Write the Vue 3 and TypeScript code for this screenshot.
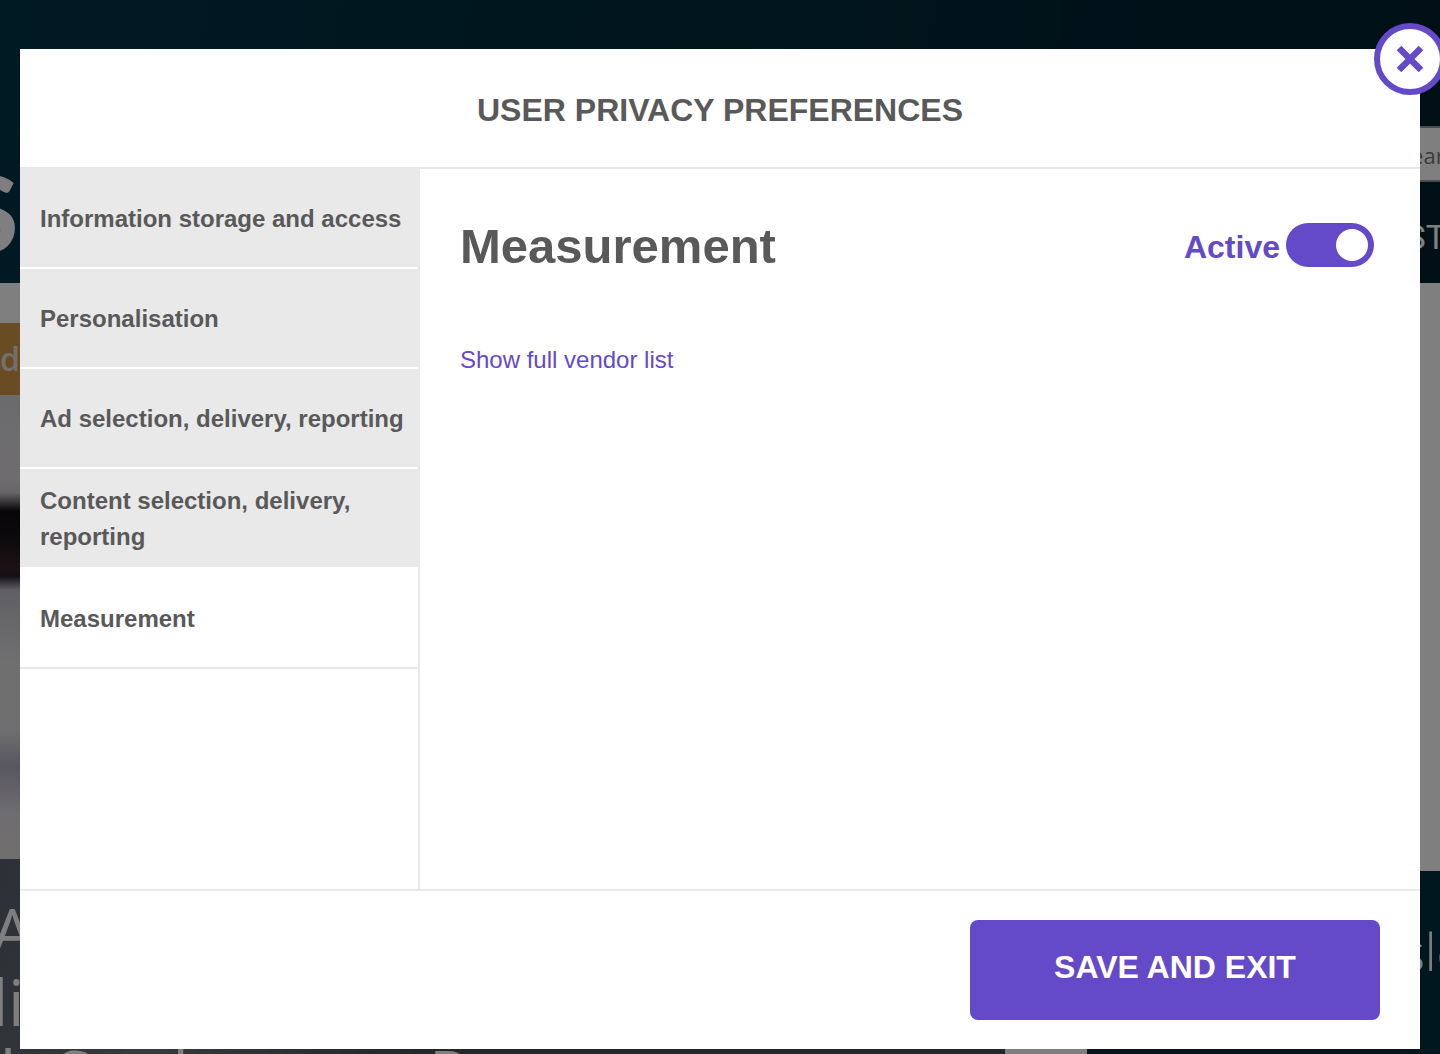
<script setup lang="ts">
import { ref } from 'vue'

interface Purpose {
  id: string
  label: string
}

const purposes: Purpose[] = [
  { id: 'storage', label: 'Information storage and access' },
  { id: 'personalisation', label: 'Personalisation' },
  { id: 'ads', label: 'Ad selection, delivery, reporting' },
  { id: 'content', label: 'Content selection, delivery, reporting' },
  { id: 'measurement', label: 'Measurement' },
]

const selected = ref<Purpose>(purposes[4])
const consent = ref<Record<string, boolean>>(
  Object.fromEntries(purposes.map((p) => [p.id, true])),
)
</script>

<template>
  <div class="shell">
    <div class="page" aria-hidden="true">
      <div class="masthead">
        <span class="brand">S</span>
        <div class="tools">
          <span class="search">Search</span>
          <span class="menu">ST</span>
        </div>
      </div>
      <div class="columns">
        <div class="story">
          <div class="tag">d</div>
          <div class="photo"></div>
          <div class="headline">
            <span class="line">A</span>
            <span class="line">li</span>
            <span class="line last">h Settlements Report</span>
          </div>
        </div>
        <div class="aside"><span class="signup">Newsletter</span></div>
      </div>
    </div>

    <div class="overlay">
      <section class="modal" role="dialog" aria-modal="true" aria-labelledby="title">
        <button class="close" type="button" aria-label="Close">
          <svg width="28" height="28" viewBox="0 0 28 28" aria-hidden="true">
            <path d="M3 3 25 25M25 3 3 25" fill="none" stroke="currentColor" stroke-width="6.5" />
          </svg>
        </button>
        <header class="top">
          <h1 id="title">USER PRIVACY PREFERENCES</h1>
        </header>
        <div class="body">
          <nav class="purposes">
            <button
              v-for="p in purposes"
              :key="p.id"
              type="button"
              class="purpose"
              :class="{ current: p.id === selected.id }"
              @click="selected = p"
            >
              {{ p.label }}
            </button>
          </nav>
          <div class="detail">
            <div class="heading">
              <h2>{{ selected.label }}</h2>
              <label class="switch">
                <span>{{ consent[selected.id] ? 'Active' : 'Inactive' }}</span>
                <input v-model="consent[selected.id]" type="checkbox" role="switch" />
              </label>
            </div>
            <a href="#vendors">Show full vendor list</a>
          </div>
        </div>
        <footer class="bottom">
          <button class="save" type="button">SAVE AND EXIT</button>
        </footer>
      </section>
    </div>
  </div>
</template>

<style>
body {
  margin: 0;
}
</style>

<style scoped>
* {
  box-sizing: border-box;
}

.shell {
  position: relative;
  height: 100vh;
  overflow: hidden;
  font-family: 'Liberation Sans', Arial, Helvetica, sans-serif;
}

/* Site behind the dialog */
.page {
  display: flex;
  flex-direction: column;
  height: 100%;
  overflow: hidden;
  background: #fff;
  color: #fff;
}

.masthead {
  display: flex;
  flex: none;
  justify-content: space-between;
  height: 283px;
  overflow: hidden;
  background: linear-gradient(100deg, #003448, #002a38 50%, #00202c);
}

.brand {
  margin: 142px 0 0 -39px;
  font: 900 104px/140px Lato, sans-serif;
}

.tools {
  display: flex;
  flex-direction: column;
  align-items: flex-end;
  padding-top: 126px;
  white-space: nowrap;
}

.search {
  width: 300px;
  height: 56px;
  margin-right: -140px;
  padding-left: 117px;
  border: 2px solid #999;
  background: #fff;
  color: #777;
  font: 22px/54px 'Open Sans', sans-serif;
}

.menu {
  margin: 30px -6px 0 0;
  font: 34px/50px Roboto, sans-serif;
}

.columns {
  display: grid;
  flex: 1;
  grid-template-columns: 1005fr 353fr;
  gap: 82px;
  overflow: hidden;
}

.story {
  padding-top: 40px;
}

.tag {
  height: 72px;
  background: #d29847;
  color: #e6e0d8;
  font: 600 32px/72px 'Open Sans', sans-serif;
}

.photo {
  height: 464px;
  background: linear-gradient(
    #d6d6dc,
    #dedadc 18%,
    #d0ccd0 21%,
    #100c10 25%,
    #181418 31%,
    #34242a 37%,
    #28202a 39%,
    #c0c0c8 42%,
    #e0dfe1 58%,
    #dedfe0 72%,
    #b0acc0 80%,
    #dcdade 90%,
    #e4dddd
  );
}

.headline {
  height: 260px;
  padding-top: 36px;
  background: linear-gradient(110deg, #5a606c, #6c7478 20%, #484e52 45%, #484e52);
  font: 64px/71px 'Open Sans', sans-serif;
  white-space: nowrap;
}

.line {
  display: block;
  margin-left: -8px;
}

.last {
  margin-left: 0;
}

.aside {
  margin-top: 588px;
  padding: 40px 0 0 210px;
  overflow: hidden;
  background: #002e40;
}

.signup {
  font: 300 52px/80px 'Open Sans', sans-serif;
}

/* Dialog */
.overlay {
  position: absolute;
  inset: 0;
  display: flex;
  padding: 49px 20px 5px;
  background: rgba(0, 0, 0, 0.5);
}

.modal {
  position: relative;
  display: flex;
  flex: 1;
  flex-direction: column;
  background: #fff;
  color: #595959;
}

.close {
  position: absolute;
  top: -26px;
  right: -26px;
  display: grid;
  place-items: center;
  width: 72px;
  height: 72px;
  padding: 0;
  border: 6px solid #6449c8;
  border-radius: 50%;
  background: #fff;
  color: #6449c8;
  cursor: pointer;
}

.top {
  padding: 42px 40px 38px;
  border-bottom: 2px solid #e9e9e9;
  text-align: center;
}

h1 {
  margin: 0;
  font-size: 32px;
  line-height: 38px;
}

.body {
  display: flex;
  flex: 1;
}

.purposes {
  flex: none;
  width: 400px;
  border-right: 2px solid #e9e9e9;
}

.purpose {
  display: block;
  width: 100%;
  height: 100px;
  padding: 2px 10px 0 20px;
  border: 0;
  border-bottom: 2px solid #fff;
  background: #e9e9e9;
  color: inherit;
  font: 700 24px/36px 'Liberation Sans', Arial, sans-serif;
  text-align: left;
  cursor: pointer;
}

.purpose.current {
  border-bottom-color: #e9e9e9;
  background: #fff;
}

.detail {
  flex: 1;
  padding: 40px;
}

.heading {
  display: flex;
  align-items: center;
  justify-content: space-between;
  height: 72px;
  margin-bottom: 61px;
}

h2 {
  margin: 0;
  padding-top: 2px;
  font-size: 49px;
  line-height: 72px;
}

.switch {
  display: flex;
  align-items: center;
  gap: 6px;
  padding-right: 6px;
  color: #6449c8;
  font-size: 32px;
  font-weight: 700;
}

.switch span {
  padding-top: 4px;
}

.switch input {
  display: flex;
  align-items: center;
  width: 88px;
  height: 44px;
  margin: 0;
  padding: 6px;
  border-radius: 22px;
  background: #999;
  appearance: none;
  cursor: pointer;
}

.switch input::before {
  width: 32px;
  height: 32px;
  border-radius: 50%;
  background: #fff;
  content: '';
}

.switch input:checked {
  justify-content: flex-end;
  background: #6449c8;
}

.detail a {
  color: #6449c8;
  font-size: 24px;
  line-height: 36px;
  text-decoration: none;
}

.bottom {
  display: flex;
  justify-content: flex-end;
  padding: 29px 40px;
  border-top: 2px solid #e9e9e9;
}

.save {
  width: 410px;
  height: 100px;
  padding: 0 0 6px;
  border: 0;
  border-radius: 8px;
  background: #6449c8;
  color: #fff;
  font: 700 32px/38px 'Liberation Sans', Arial, sans-serif;
  cursor: pointer;
}
</style>
